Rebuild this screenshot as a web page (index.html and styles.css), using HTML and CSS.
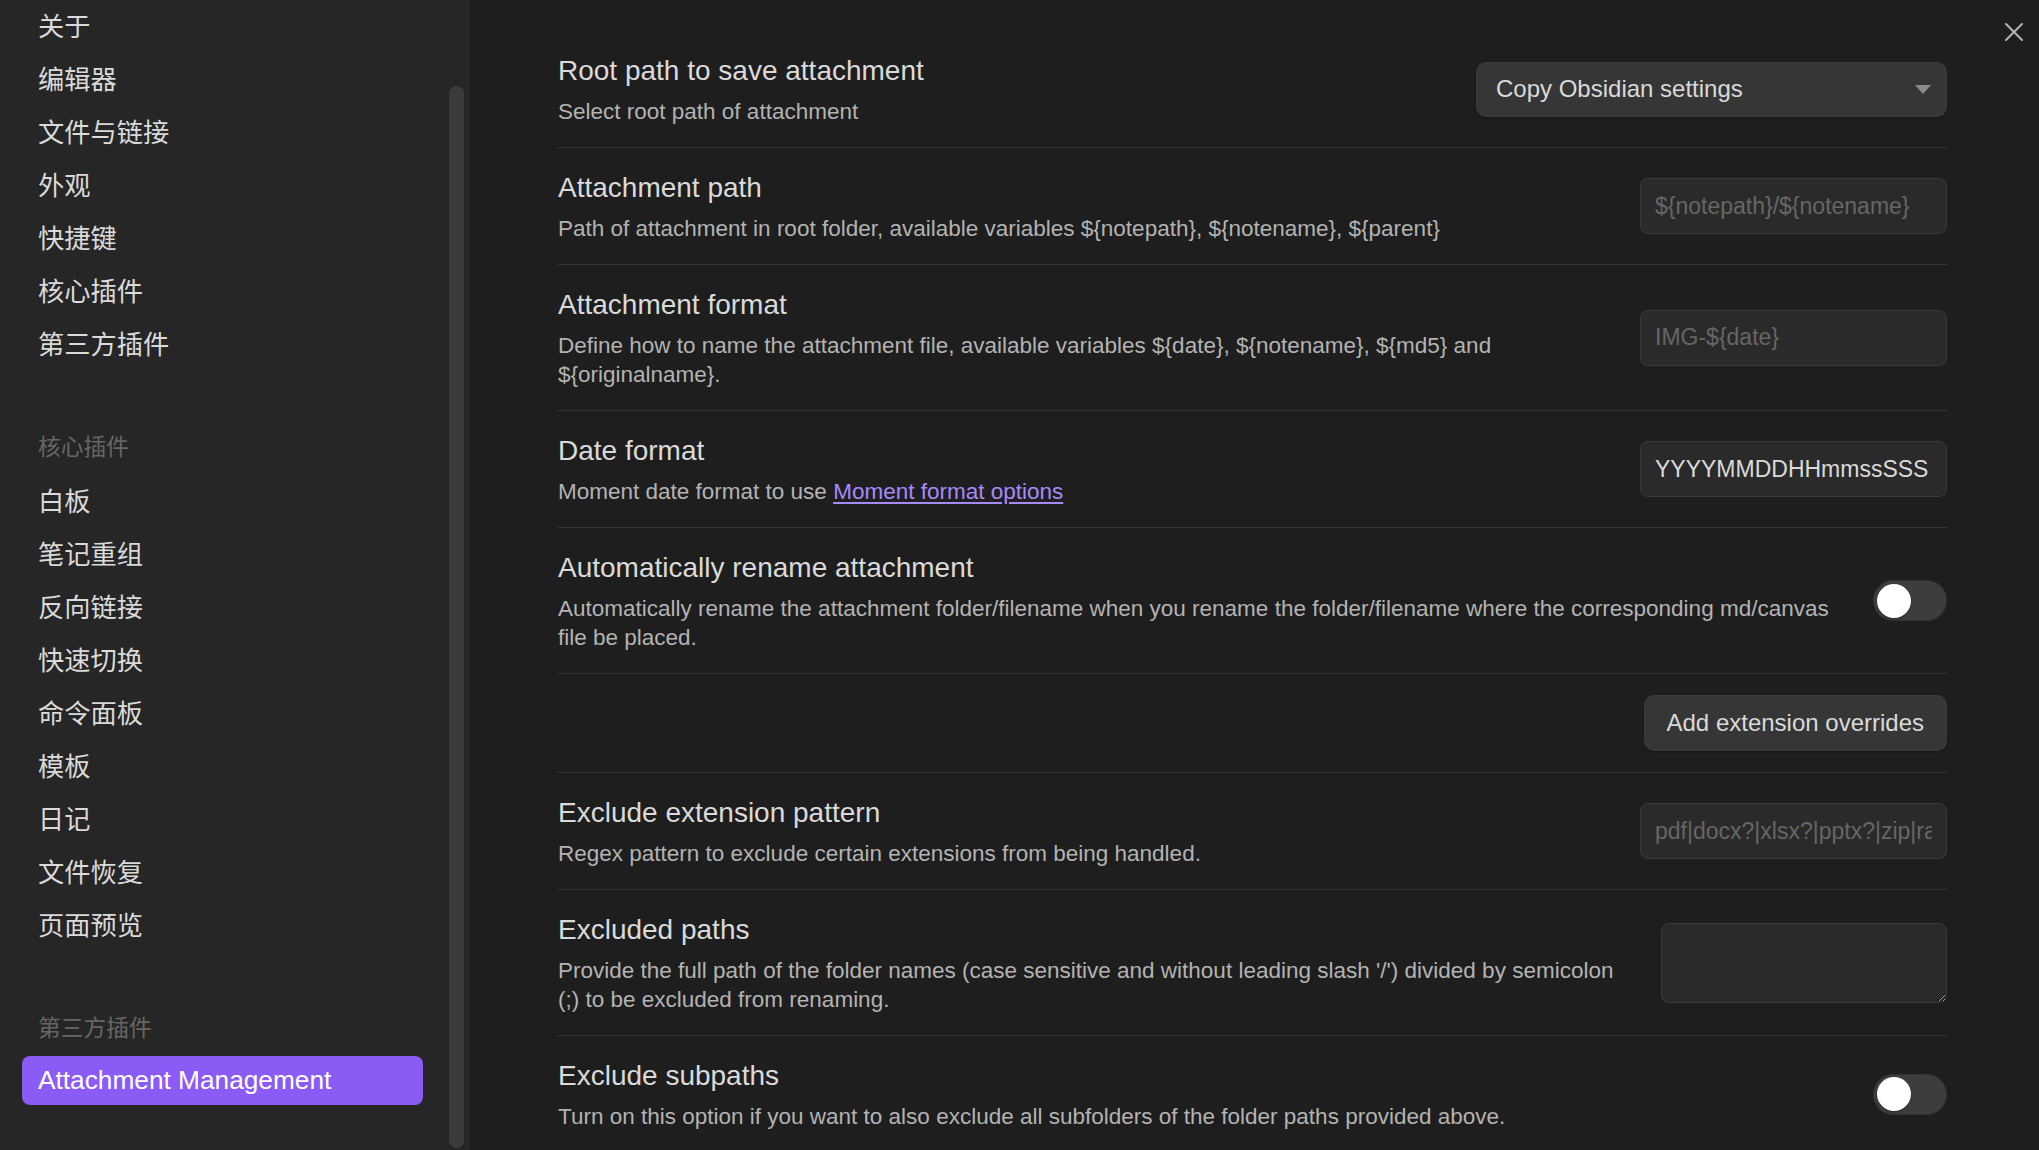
FILE: index.html
```html
<!DOCTYPE html>
<html lang="zh-CN">
<head>
<meta charset="utf-8">
<title>Attachment Management – Settings</title>
<link rel="stylesheet" href="styles.css">
</head>
<body>
<div class="modal">
  <aside class="sidebar">
    <nav class="nav">
      <div class="nav-group">
        <div class="nav-item">关于</div>
        <div class="nav-item">编辑器</div>
        <div class="nav-item">文件与链接</div>
        <div class="nav-item">外观</div>
        <div class="nav-item">快捷键</div>
        <div class="nav-item">核心插件</div>
        <div class="nav-item">第三方插件</div>
      </div>
      <div class="nav-group-title">核心插件</div>
      <div class="nav-group">
        <div class="nav-item">白板</div>
        <div class="nav-item">笔记重组</div>
        <div class="nav-item">反向链接</div>
        <div class="nav-item">快速切换</div>
        <div class="nav-item">命令面板</div>
        <div class="nav-item">模板</div>
        <div class="nav-item">日记</div>
        <div class="nav-item">文件恢复</div>
        <div class="nav-item">页面预览</div>
      </div>
      <div class="nav-group-title">第三方插件</div>
      <div class="nav-group">
        <div class="nav-item is-active">Attachment Management</div>
      </div>
    </nav>
    <div class="scrollbar"><div class="scrollbar-thumb"></div></div>
  </aside>

  <main class="content">
    <button class="close-btn" aria-label="Close">
      <svg viewBox="0 0 20 20" width="20" height="20"><path d="M2 2 L18 18 M18 2 L2 18" stroke="currentColor" stroke-width="2" stroke-linecap="round" fill="none"/></svg>
    </button>

    <div class="setting-item">
      <div class="setting-info">
        <div class="setting-name">Root path to save attachment</div>
        <div class="setting-desc">Select root path of attachment</div>
      </div>
      <div class="setting-control">
        <div class="dropdown">
          <span>Copy Obsidian settings</span>
          <svg class="dropdown-arrow" viewBox="0 0 16 9" width="16" height="9"><path d="M0 0 H16 L8 9 Z" fill="currentColor"/></svg>
        </div>
      </div>
    </div>

    <div class="setting-item">
      <div class="setting-info">
        <div class="setting-name">Attachment path</div>
        <div class="setting-desc">Path of attachment in root folder, available variables ${notepath}, ${notename}, ${parent}</div>
      </div>
      <div class="setting-control">
        <input class="text-input" type="text" placeholder="${notepath}/${notename}">
      </div>
    </div>

    <div class="setting-item">
      <div class="setting-info">
        <div class="setting-name">Attachment format</div>
        <div class="setting-desc">Define how to name the attachment file, available variables ${date}, ${notename}, ${md5} and ${originalname}.</div>
      </div>
      <div class="setting-control">
        <input class="text-input" type="text" placeholder="IMG-${date}">
      </div>
    </div>

    <div class="setting-item">
      <div class="setting-info">
        <div class="setting-name">Date format</div>
        <div class="setting-desc">Moment date format to use <a class="link" href="#">Moment format options</a></div>
      </div>
      <div class="setting-control">
        <input class="text-input" type="text" value="YYYYMMDDHHmmssSSS">
      </div>
    </div>

    <div class="setting-item">
      <div class="setting-info">
        <div class="setting-name">Automatically rename attachment</div>
        <div class="setting-desc">Automatically rename the attachment folder/filename when you rename the folder/filename where the corresponding md/canvas file be placed.</div>
      </div>
      <div class="setting-control">
        <div class="toggle"><div class="toggle-knob"></div></div>
      </div>
    </div>

    <div class="setting-item">
      <div class="setting-info"></div>
      <div class="setting-control">
        <button class="btn">Add extension overrides</button>
      </div>
    </div>

    <div class="setting-item">
      <div class="setting-info">
        <div class="setting-name">Exclude extension pattern</div>
        <div class="setting-desc">Regex pattern to exclude certain extensions from being handled.</div>
      </div>
      <div class="setting-control">
        <input class="text-input" type="text" placeholder="pdf|docx?|xlsx?|pptx?|zip|rar">
      </div>
    </div>

    <div class="setting-item">
      <div class="setting-info">
        <div class="setting-name">Excluded paths</div>
        <div class="setting-desc">Provide the full path of the folder names (case sensitive and without leading slash '/') divided by semicolon (;) to be excluded from renaming.</div>
      </div>
      <div class="setting-control">
        <textarea class="textarea"></textarea>
      </div>
    </div>

    <div class="setting-item">
      <div class="setting-info">
        <div class="setting-name">Exclude subpaths</div>
        <div class="setting-desc">Turn on this option if you want to also exclude all subfolders of the folder paths provided above.</div>
      </div>
      <div class="setting-control">
        <div class="toggle"><div class="toggle-knob"></div></div>
      </div>
    </div>
  </main>
</div>
</body>
</html>
```

FILE: styles.css
```css
* { box-sizing: border-box; }

html, body {
  margin: 0;
  padding: 0;
  height: 100%;
  background: #1e1e1e;
  overflow: hidden;
}

body {
  font-family: "Liberation Sans", "Noto Sans CJK SC", sans-serif;
  color: #dadada;
}

.modal {
  display: flex;
  height: 1150px;
  width: 2039px;
  position: relative;
}

/* ---------- Sidebar ---------- */
.sidebar {
  width: 469px;
  flex-shrink: 0;
  background: #262626;
  border-right: 1px solid #2e2e2e;
  display: flex;
  overflow: hidden;
}

.nav {
  width: 423px;
  padding: 0 0 0 22px;
  flex-shrink: 0;
}

.nav-group {
  display: flex;
  flex-direction: column;
}

.nav-item {
  height: 49px;
  margin-bottom: 4px;
  padding: 0 16px;
  display: flex;
  align-items: center;
  font-size: 26.25px;
  color: #dadada;
  border-radius: 8px;
  white-space: nowrap;
}

.nav-item.is-active {
  background: #8a5cf5;
  color: #ffffff;
}

.nav-group-title {
  height: 104px;
  padding: 61px 16px 0;
  line-height: 31px;
  font-size: 22.75px;
  color: #666666;
}

.scrollbar {
  margin-left: 26px;
  width: 15px;
  flex-shrink: 0;
  padding-top: 86px;
  padding-bottom: 2px;
  display: flex;
}

.scrollbar-thumb {
  flex: 1;
  width: 15px;
  background: #3b3b3b;
  border-radius: 8px;
}

/* ---------- Content ---------- */
.content {
  flex: 1;
  padding: 31px 92px 0 89px;
  overflow: hidden;
}

.close-btn {
  position: absolute;
  top: 22px;
  right: 15px;
  width: 20px;
  height: 20px;
  padding: 0;
  border: none;
  background: transparent;
  color: #b5b5b5;
  display: flex;
}

.setting-item {
  display: flex;
  align-items: center;
  padding: 21px 0;
  border-top: 1px solid #363636;
}

.setting-item:first-of-type {
  border-top: none;
}

.setting-info {
  flex: 1;
  min-width: 0;
  margin-right: 24px;
}

.setting-name {
  font-size: 28px;
  line-height: 37px;
  color: #dadada;
}

.setting-desc {
  margin-top: 8px;
  font-size: 22.5px;
  line-height: 29px;
  color: #b3b3b3;
}

.link {
  color: #a68af9;
  text-decoration: underline;
  text-underline-offset: 3px;
}

.setting-control {
  flex-shrink: 0;
  display: flex;
  justify-content: flex-end;
}

.dropdown {
  width: 471px;
  height: 55px;
  padding: 0 16px 0 20px;
  display: flex;
  align-items: center;
  justify-content: space-between;
  background: #363636;
  border-radius: 10px;
  box-shadow: 0 1px 2px rgba(0, 0, 0, 0.35), inset 0 0 0 1px rgba(255, 255, 255, 0.03);
  font-size: 24px;
  color: #dadada;
}

.dropdown-arrow {
  color: #8c8c8c;
}

.text-input {
  width: 307px;
  height: 56px;
  padding: 0 14px;
  background: #2a2a2a;
  border: 1px solid #3a3a3a;
  border-radius: 8px;
  font-family: "Liberation Sans", "Noto Sans CJK SC", sans-serif;
  font-size: 23px;
  color: #dadada;
  outline: none;
}

.text-input::placeholder {
  color: #666666;
}

.textarea {
  display: block;
  width: 286px;
  height: 80px;
  background: #2a2a2a;
  border: 1px solid #3a3a3a;
  border-radius: 8px;
  color: #dadada;
  font-family: "Liberation Sans", sans-serif;
  font-size: 22.75px;
  outline: none;
}

.toggle {
  width: 74px;
  height: 41px;
  border-radius: 21px;
  background: #3d3d3d;
  box-shadow: inset 0 0 0 1px rgba(0, 0, 0, 0.15);
  display: flex;
  align-items: center;
  padding-left: 4px;
}

.toggle-knob {
  width: 34px;
  height: 34px;
  border-radius: 50%;
  background: #ffffff;
  box-shadow: 0 1px 2px rgba(0, 0, 0, 0.3);
}

.btn {
  height: 56px;
  padding: 0 23px;
  background: #363636;
  border: none;
  border-radius: 10px;
  box-shadow: 0 1px 2px rgba(0, 0, 0, 0.35), inset 0 0 0 1px rgba(255, 255, 255, 0.03);
  font-family: "Liberation Sans", sans-serif;
  font-size: 24px;
  color: #dadada;
}
```
